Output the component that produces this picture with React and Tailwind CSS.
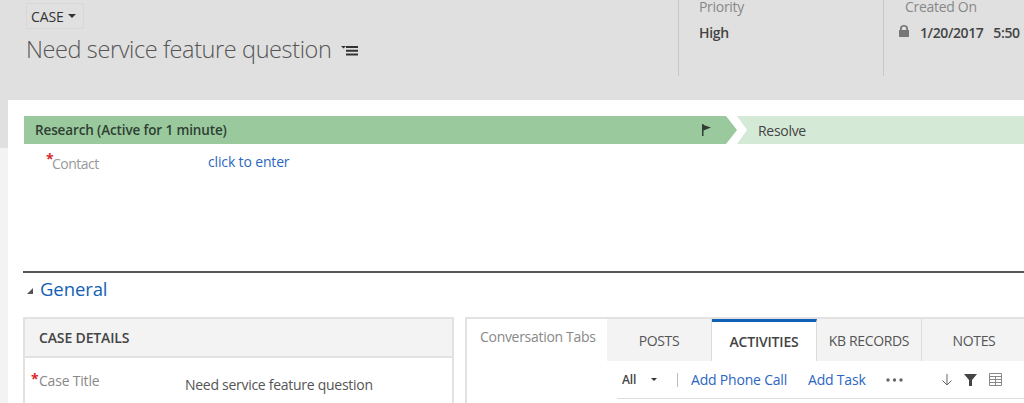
import React from 'react';

const font = "font-['Open_Sans','Noto_Sans',sans-serif]";

const Caret = ({ className }) => (
  <svg viewBox="0 0 8 4" className={className} fill="currentColor">
    <path d="M0 0h8L4 4z" />
  </svg>
);

const Header = () => (
  <div className="flex h-[100px] shrink-0 bg-[#e0e0e0]">
    <div className="w-[670px] shrink-0 pl-[18px] pt-[3px]">
      <div className="flex h-[26px] w-[58px] items-center gap-1 border border-[#d8d8d8] pl-1 text-[14px] text-[#333] tracking-[-0.1px]">
        CASE
        <Caret className="h-1 w-2 text-[#333]" />
      </div>
      <div className="mt-[3px] flex items-center">
        <span className="text-[23.5px] leading-[34px] font-light tracking-[-0.4px] text-[#555]">Need service feature question</span>
        <svg viewBox="0 0 18 10" className="ml-[10px] mt-1 h-[10px] w-[18px] text-[#333]" fill="currentColor">
          <path d="M0 0h5L2.500 2.500z" />
          <path d="M5 0h12v2H5zM5 3.700h12v2H5zM5 7.500h12v2H5z" />
        </svg>
      </div>
    </div>
    <div className="h-[76px] w-[205px] shrink-0 border-l border-[#c8c8c8] pl-5">
      <div className="text-[14px] leading-[14px] text-[#888] tracking-[-0.3px]">Priority</div>
      <div className="mt-[10px] text-[14px] leading-[18px] font-semibold text-[#444] tracking-[-0.3px]">High</div>
    </div>
    <div className="h-[76px] flex-1 overflow-hidden border-l border-[#c8c8c8] pl-[21px]">
      <div className="text-[14px] leading-[14px] text-[#888] tracking-[-0.3px]">Created On</div>
      <div className="mt-[10px] flex items-center whitespace-nowrap text-[14px] leading-[18px] font-semibold text-[#444] tracking-[-0.4px]">
        <svg viewBox="0 0 10 12" className="-ml-[6px] mb-1 h-3 w-[10px] text-[#777]" fill="currentColor">
          <path d="M1 5V3.500a4 3.500 0 0 1 8 0V5h1v7H0V5zM2.800 5h4.400V3.600a2.200 2 0 0 0-4.400 0z" />
        </svg>
        <span className="ml-[11px]">1/20/2017</span>
        <span className="ml-[10px]">5:50</span>
      </div>
    </div>
  </div>
);

const ProcessBar = () => (
  <div className="ml-4 mt-4 flex h-[28px] shrink-0">
    <div className="flex w-[713px] shrink-0 items-center justify-between bg-[#99c99d] pl-[11px] pr-[25px] [clip-path:polygon(0_0,702px_0,713px_50%,702px_100%,0_100%)]">
      <span className="text-[13.5px] font-semibold text-[#2f3f33] tracking-[-0.13px]">Research (Active for 1 minute)</span>
      <svg viewBox="0 0 10 12" className="h-[14px] w-[10px] text-[#2f3b33]" fill="currentColor">
        <path d="M0 0h1.500v1L9 3.500 1.500 6.500V12H0z" />
      </svg>
    </div>
    <div className="flex flex-1 items-center bg-[#d4e9d6] pl-[21px] text-[14px] text-[#444] tracking-[-0.3px] [clip-path:polygon(0_0,100%_0,100%_100%,0_100%,10px_50%)]">
      Resolve
    </div>
  </div>
);

const Tab = ({ label, active }) => (
  <div
    className={
      active
        ? 'flex h-[42px] w-[105px] shrink-0 items-center justify-center border-t-[3px] border-r border-t-[#1160b7] border-r-[#dcdcdc] bg-white text-[14px] font-semibold text-[#444] tracking-[-0.2px]'
        : 'flex h-[42px] w-[105px] shrink-0 items-center justify-center border-r border-[#dcdcdc] bg-[#f3f3f3] text-[14px] text-[#555] tracking-[-0.35px]'
    }
  >
    {label}
  </div>
);

const Toolbar = () => (
  <div className="ml-[10px] flex h-[38px] items-center border-b border-[#dcdcdc] text-[14px] tracking-[-0.2px]">
    <span className="ml-[5px] text-[12px] font-semibold text-[#444]">All</span>
    <Caret className="ml-[15px] h-[3px] w-[6px] text-[#333]" />
    <span className="ml-[20px] h-[14px] w-px bg-[#bbb]" />
    <a className="ml-[13px] text-[#2b66c2]">Add Phone Call</a>
    <a className="ml-[21px] text-[#2b66c2]">Add Task</a>
    <svg viewBox="0 0 17 4" className="ml-[20px] h-1 w-[17px] text-[#666]" fill="currentColor">
      <circle cx="2" cy="2" r="1.700" />
      <circle cx="8.500" cy="2" r="1.700" />
      <circle cx="15" cy="2" r="1.700" />
    </svg>
    <svg viewBox="0 0 12 12" className="ml-[38px] h-3 w-3 text-[#666]" fill="none" stroke="currentColor" strokeWidth="1">
      <path d="M6 0v11M1.500 6.500 6 11l4.500-4.500" />
    </svg>
    <svg viewBox="0 0 13 12" className="ml-[11px] h-3 w-[13px] text-[#444]" fill="currentColor">
      <path d="M0 0h13L8 6v6H5V6z" />
    </svg>
    <svg viewBox="0 0 13 13" className="ml-[12px] h-[13px] w-[13px] text-[#888]" fill="none" stroke="currentColor" strokeWidth="1">
      <path d="M.5.500h12v12H.5zM.5 3.500h12M.5 6.500h12M.5 9.500h12M6.500 3.500v9" />
    </svg>
  </div>
);

export default function App() {
  return (
    <div className={`flex h-[403px] w-[1024px] overflow-hidden bg-white ${font}`}>
      <div className="flex w-2 shrink-0 flex-col bg-[#f3f3f3]">
        <div className="h-[148px] bg-[#e0e0e0]" />
      </div>
      <div className="flex min-w-0 flex-1 flex-col">
        <Header />
        <ProcessBar />
        <div className="flex h-[127px] shrink-0 items-start pl-[38px] pt-[8px]">
          <div className="flex w-[162px]">
            <span className="w-[6px] text-[14px] leading-[14px] font-bold text-[#d9272c]">*</span>
            <span className="mt-[1px] text-[14px] leading-[22px] text-[#999] tracking-[-0.5px]">Contact</span>
          </div>
          <a className="text-[14px] leading-[20px] text-[#2b66c2] tracking-[-0.15px]">click to enter</a>
        </div>
        <div className="ml-[15px] border-t-2 border-[#555]">
          <div className="flex h-[44px] items-start pt-[1px]">
            <svg viewBox="0 0 6 6" className="ml-1 mr-[7px] mt-[14px] h-[6px] w-[6px] text-[#555]" fill="currentColor">
              <path d="M6 0v6H0z" />
            </svg>
            <span className="text-[18.5px] leading-[30px] text-[#1160b7] tracking-[-0.1px]">General</span>
          </div>
          <div className="flex gap-[11px]">
            <div className="h-[100px] w-[431px] shrink-0 border-2 border-b-0 border-[#e2e2e2]">
              <div className="flex h-[39px] items-center border-b-2 border-[#e2e2e2] bg-[#f3f3f3] pl-[14px] text-[14px] font-semibold text-[#444] tracking-[-0.15px]">
                CASE DETAILS
              </div>
              <div className="flex pl-[6px] pt-[14px]">
                <span className="w-[8px] text-[14px] leading-[14px] font-bold text-[#d9272c]">*</span>
                <span className="w-[146px] text-[14px] leading-[18px] text-[#888] tracking-[-0.2px]">Case Title</span>
                <span className="mt-[4px] text-[14px] leading-[18px] text-[#555] tracking-[-0.28px]">Need service feature question</span>
              </div>
            </div>
            <div className="h-[100px] flex-1 border-t-2 border-l-2 border-[#e2e2e2]">
              <div className="flex">
                <div className="w-[140px] shrink-0 pl-[13px] pt-[8px] text-[14px] leading-[20px] text-[#888] tracking-[-0.3px]">Conversation Tabs</div>
                <div className="min-w-0 flex-1">
                  <div className="flex">
                    <Tab label="POSTS" />
                    <Tab label="ACTIVITIES" active />
                    <Tab label="KB RECORDS" />
                    <Tab label="NOTES" />
                  </div>
                  <Toolbar />
                </div>
              </div>
            </div>
          </div>
        </div>
      </div>
    </div>
  );
}
